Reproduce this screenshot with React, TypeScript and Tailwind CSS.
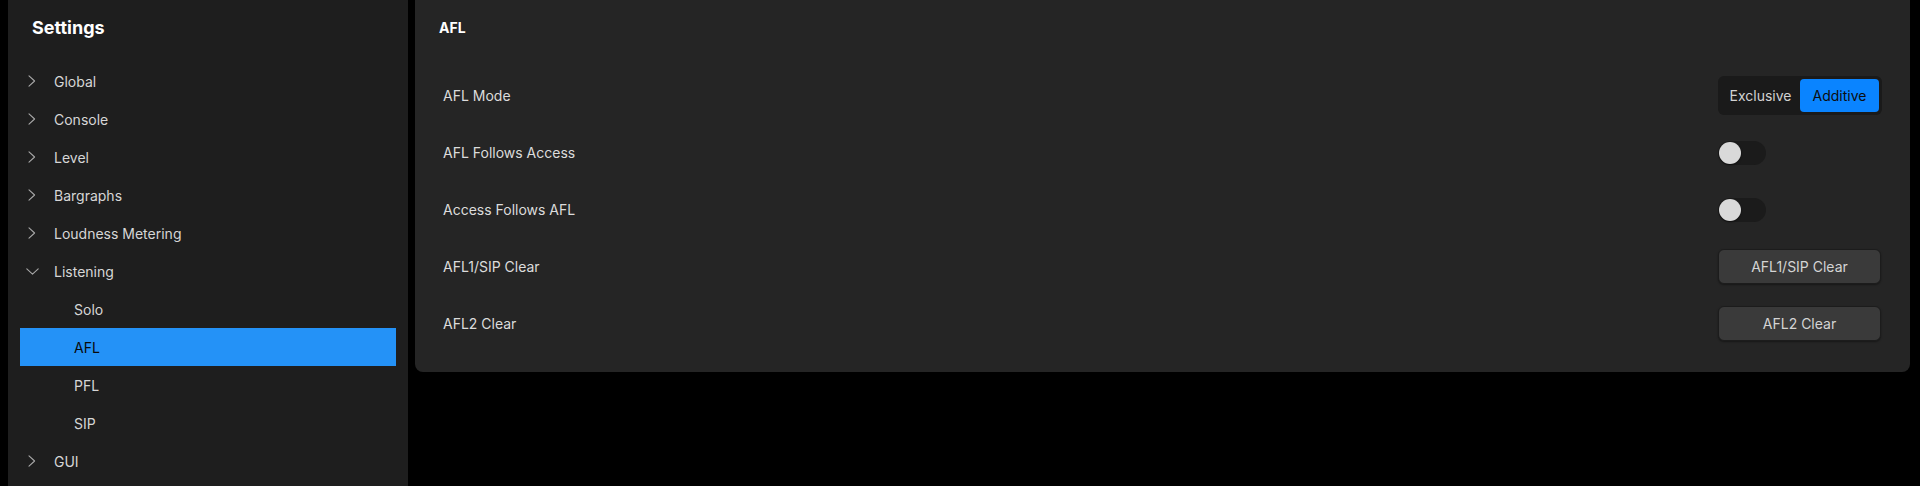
import React from 'react';

const ChevronRight = () => (
  <svg width="8" height="12" viewBox="0 0 8 12" fill="none">
    <path d="M1 0.8 L6.6 6 L1 11.2" stroke="#a8a8a8" strokeWidth="1.1" strokeLinecap="round" strokeLinejoin="round" />
  </svg>
);

const ChevronDown = () => (
  <svg width="13" height="7" viewBox="0 0 13 7" fill="none">
    <path d="M0.8 0.8 L6.5 6.2 L12.2 0.8" stroke="#a8a8a8" strokeWidth="1.1" strokeLinecap="round" strokeLinejoin="round" />
  </svg>
);

type NavItem = { label: string; open?: boolean; children?: string[] };

const nav: NavItem[] = [
  { label: 'Global' },
  { label: 'Console' },
  { label: 'Level' },
  { label: 'Bargraphs' },
  { label: 'Loudness Metering' },
  { label: 'Listening', open: true, children: ['Solo', 'AFL', 'PFL', 'SIP'] },
  { label: 'GUI' },
];

const Toggle = () => (
  <div className="w-[48px] h-[24px] rounded-full bg-[#1b1b1b] flex items-center px-[1px]">
    <div className="w-[22px] h-[22px] rounded-full bg-[#d9d9d9] shadow-[0_1px_2px_rgba(0,0,0,0.5)]" />
  </div>
);

const ActionButton = ({ label }: { label: string }) => (
  <button className="w-[163px] h-[35px] rounded-md bg-[#3a3a3a] border border-[#1c1c1c] text-[14px] text-[#d4d4d4] shadow-[0_1px_2px_rgba(0,0,0,0.4)]">
    {label}
  </button>
);

const App = () => {
  const rows: { label: string; control: React.ReactNode }[] = [
    {
      label: 'AFL Mode',
      control: (
        <div className="w-[164px] h-[39px] rounded-md bg-[#1a1a1a] p-[3px] flex">
          <button className="flex-1 text-[14px] text-[#d2d2d2]">Exclusive</button>
          <button className="flex-1 rounded-[4px] bg-[#0a84ff] text-[14px] text-[#0d0d0d]">Additive</button>
        </div>
      ),
    },
    { label: 'AFL Follows Access', control: <Toggle /> },
    { label: 'Access Follows AFL', control: <Toggle /> },
    { label: 'AFL1/SIP Clear', control: <ActionButton label="AFL1/SIP Clear" /> },
    { label: 'AFL2 Clear', control: <ActionButton label="AFL2 Clear" /> },
  ];

  return (
    <div className="w-[1920px] h-[486px] bg-black flex overflow-hidden" style={{ fontFamily: 'Inter, "Noto Sans", sans-serif' }}>
      <aside className="ml-2 w-[400px] h-full bg-[#1e1e1e] flex flex-col">
        <div className="h-[54px] px-6 flex items-center">
          <h1 className="text-[18px] font-bold text-white">Settings</h1>
        </div>
        <nav className="mt-2 px-3">
          {nav.map((item) => (
            <div key={item.label}>
              <div className="h-[38px] flex items-center text-[14px] text-[#d6d6d6]">
                <span className={item.open ? 'w-[34px] pl-[6px] flex items-center' : 'w-[34px] pl-2 flex items-center'}>
                  {item.open ? <ChevronDown /> : <ChevronRight />}
                </span>
                {item.label}
              </div>
              {item.children?.map((child) => (
                <div
                  key={child}
                  className={
                    child === 'AFL'
                      ? 'h-[38px] flex items-center pl-[54px] text-[14px] bg-[#2492f7] text-[#0a0a0a]'
                      : 'h-[38px] flex items-center pl-[54px] text-[14px] text-[#d6d6d6]'
                  }
                >
                  {child}
                </div>
              ))}
            </div>
          ))}
        </nav>
      </aside>

      <main className="ml-[7px] mr-[10px] flex-1 h-[372px] bg-[#252525] rounded-b-lg px-6 pb-[19px]">
        <div className="h-[54px] flex items-center">
          <h2 className="text-[14px] font-bold text-white">AFL</h2>
        </div>
        <div className="mt-[13px] px-1">
          {rows.map((row) => (
            <div key={row.label} className="h-[57px] flex items-center justify-between">
              <span className="text-[14px] text-[#dcdcdc]">{row.label}</span>
              <div className="w-[164px] flex">{row.control}</div>
            </div>
          ))}
        </div>
      </main>
    </div>
  );
};

export default App;
